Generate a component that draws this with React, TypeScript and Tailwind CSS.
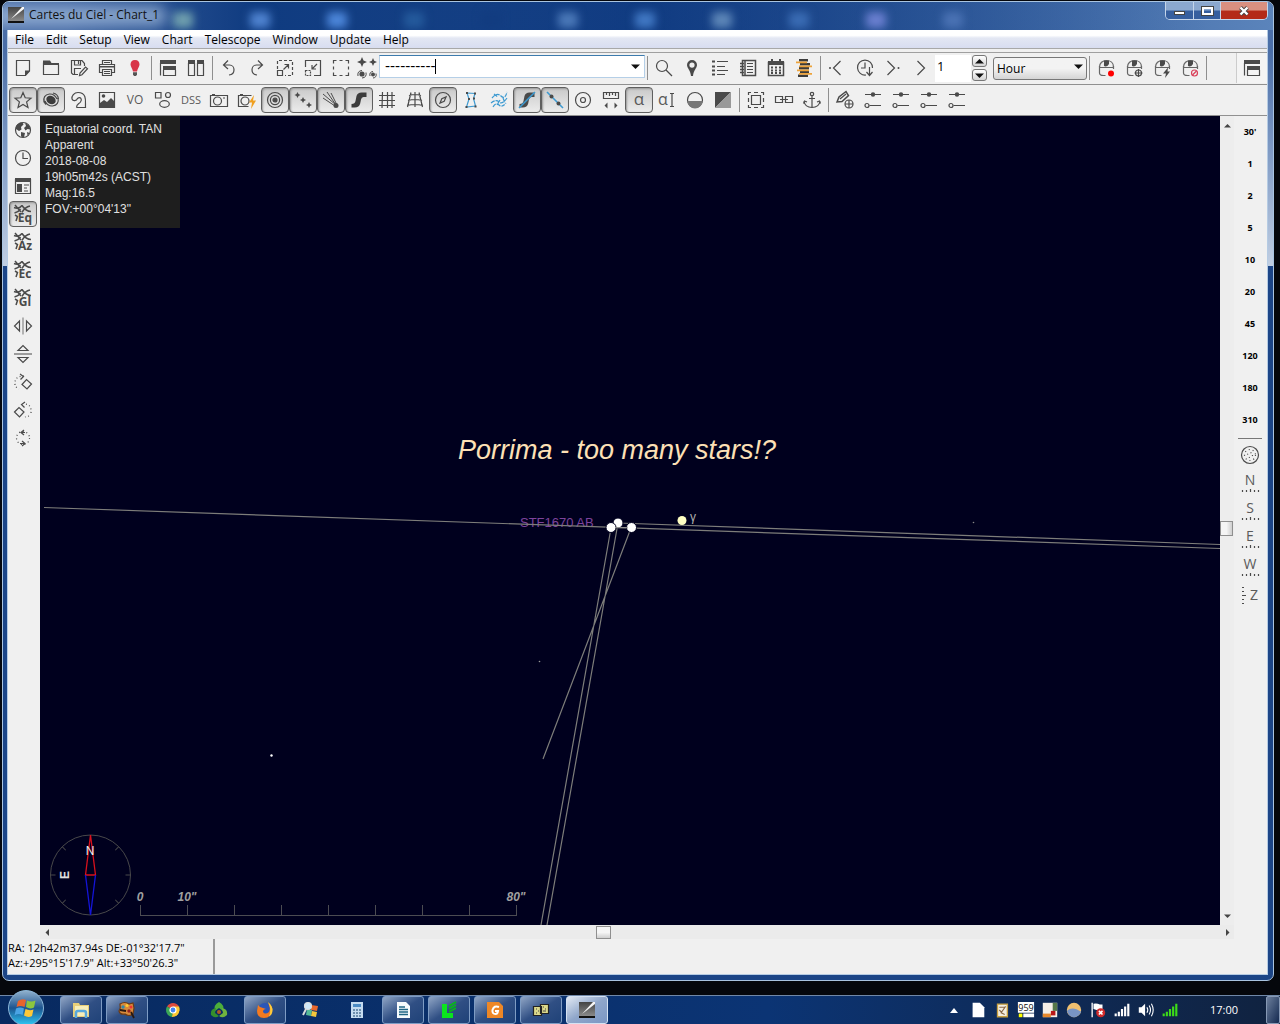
import { ReactNode } from 'react';

const INK = '#4a4a4a';
const BLUE = '#3d9ad1';

function Icon({ children, size = 20 }: { children: ReactNode; size?: number }) {
    return (
        <svg width={size} height={size} viewBox="0 0 20 20" fill="none" stroke={INK} strokeWidth="1.2" className="shrink-0 overflow-visible">
            {children}
        </svg>
    );
}

function Solid({ d, color = INK }: { d: string; color?: string }) {
    return <path d={d} fill={color} stroke="none" />;
}

function IconText({ children, x = 10, y = 14, size = 12 }: { children: ReactNode; x?: number; y?: number; size?: number }) {
    return (
        <text x={x} y={y} fontSize={size} textAnchor="middle" fill="#5a5a5a" stroke="none" fontFamily="'Open Sans', sans-serif">
            {children}
        </text>
    );
}

type Tool = { name: string; icon: ReactNode; pressed?: boolean };

function ToolButton({ name, icon, pressed }: Tool) {
    return (
        <button
            type="button"
            aria-label={name}
            aria-pressed={pressed}
            className={
                pressed
                    ? 'flex h-[26px] w-7 shrink-0 items-center justify-center rounded-[4px] border border-[#5f5f5f] bg-linear-to-b from-[#c9c9c9] to-[#ececec] shadow-[inset_1px_1px_2px_#999]'
                    : 'flex h-[26px] w-7 shrink-0 items-center justify-center'
            }
        >
            <Icon>{icon}</Icon>
        </button>
    );
}

function Sep() {
    return <div className="mx-[2px] h-6 w-px shrink-0 bg-[#8f8f8f]" />;
}

/* ---------- main toolbar ---------- */

const mouse = (
    <>
        <path d="M3.5 8v7q0 2.500 4 2.500h2M17.500 8v3M3.500 9.500h14" stroke="#666" />
        <path d="M3.500 9c0-4 3-6.500 7-6.500s7 2.500 7 6.500" stroke="#666" />
        <Solid d="M8 2.500h5v3.500q-1.500 2.500-3.500 2.500T8 6z" />
    </>
);

const fileTools: Tool[] = [
    { name: 'New chart', icon: <><path d="M3.500 2.500h13v10.500l-4 4.500h-9z" /><Solid d="M17 12.500h-5V18z" /></> },
    { name: 'Open', icon: <><path d="M2.500 4.500v12h15v-10" /><Solid d="M2 2.500h7l1.500 2.500H18v2H2z" /></> },
    {
        name: 'Save',
        icon: (
            <>
                <path d="M9 16.500H4l-1.500-1.500V2.500H13l2.500 3V8M5.500 2.500v4.500h6V2.500M9.500 3v3M5.500 16v-5.500H12" />
                <path d="m10.500 17.500.5-2.500 5.500-6 2 1.700-5.500 6z" />
            </>
        ),
    },
    {
        name: 'Print',
        icon: (
            <>
                <path d="M5.500 6.500v-4h9v4M5.500 14.500h-3v-8h15v8h-3" />
                <path d="M5.500 11.500h9v6h-9zM7 4.500h6M7 13.500h6M7 15.500h6" />
                <Solid d="M3 8h14v1.500H3z" />
            </>
        ),
    },
    { name: 'Night vision', icon: <><Solid d="M10 2c3 0 4.500 2 4.500 4.500 0 2-2 4-2.500 7H8c-.5-3-2.500-5-2.500-7C5.500 4 7 2 10 2z" color="#d83548" /><Solid d="M8 14.300h4v2.200l-1 1.500H9l-1-1.500z" color="#555" /></> },
];

const windowTools: Tool[] = [
    { name: 'Cascade', icon: <><Solid d="M2 2h16v4H2zM5 8h13v4H5z" /><path d="M2.500 5v12.500M5.500 12v5.500h12V12" strokeWidth="1.200" /></> },
    { name: 'Tile', icon: <><Solid d="M2 2h7v4H2zM11 2h7v4h-7z" /><path d="M2.500 5v12.500h6V5M11.500 5v12.500h6V5" strokeWidth="1.200" /></> },
];

const historyTools: Tool[] = [
    { name: 'Undo', icon: <path d="M9 2.500 4.500 7 9 11M5 7h5.500c3 0 4.500 2.500 4.500 4.700 0 3-2 5-5 5.300" /> },
    { name: 'Redo', icon: <path d="M11 2.500 15.500 7 11 11M15 7H9.500C6.500 7 5 9.500 5 11.700c0 3 2 5 5 5.300" /> },
    { name: 'Zoom in', icon: <><path d="M2.500 11V2.500h15v15H10" strokeDasharray="3 2" /><path d="M2.500 12.500h5v5h-5zM8.500 11.500 13 7M9.500 6.500h4v4" /></> },
    { name: 'Zoom out', icon: <><path d="M2.500 9V2.500h15v15H11" /><path d="M2.500 12.500h5v5h-5z" strokeDasharray="2 1" /><path d="m14 6-4.500 4.500M9 7v4h4" /></> },
    { name: 'Select area', icon: <path d="M2.500 5.500v-3h3M8.500 2.500h3M14.500 2.500h3v3M17.500 8.500v3M17.500 14.500v3h-3M11.500 17.500h-3M5.500 17.500h-3v-3M2.500 11.500v-3" /> },
];

const findTools: Tool[] = [
    { name: 'Search', icon: <><circle cx="8" cy="8" r="5.500" /><path d="m12 12 6 6" /></> },
    { name: 'Position', icon: <path fillRule="evenodd" fill={INK} stroke="none" d="M10 2a5 5 0 0 1 5 5c0 3-3.500 5-4 11H9C8.500 12 5 10 5 7a5 5 0 0 1 5-5zm0 2.500a2.600 2.600 0 1 0 0 5.200 2.600 2.600 0 0 0 0-5.200z" /> },
    { name: 'Object list', icon: <><path d="M7 3.500h11M7 8.500h8M7 12.500h11M7 16.500h8" /><path d="M2 3.500h3M2 8.500h3M2 12.500h3M2 16.500h3" strokeWidth="2" /></> },
    { name: 'Notebook', icon: <><path d="M4.500 2.500h13v15h-13z" strokeWidth="1.500" /><path d="M9 5.500h6M9 8.500h6M9 11.500h6M9 14.500h6" /><path d="M7 3v14M2 5.500h4M2 8.500h4M2 11.500h4M2 14.500h4" strokeWidth="1.500" /></> },
    { name: 'Calendar', icon: <><path d="M2.500 4.500h15v13h-15z" strokeWidth="1.500" /><Solid d="M2 3h16v4H2zM5 1h2v3H5zM13 1h2v3h-2z" /><path d="M5 9.500h10M5 12.500h10M5 15h10" strokeDasharray="2 2" strokeWidth="1.800" /></> },
    {
        name: 'Observing list',
        icon: (
            <>
                <Solid d="M5 1h9v2.500H5zM6 5h10v2.500H6zM5 9h10v2.500H5zM6 13h9v2.500H6zM4 16.500h10V19H4z" color="#3c3c3c" />
                <path d="M2 4.300h11M5 8.300h13M3 12.300h12M5 15.900h13" stroke="#eda33b" strokeWidth="1.700" />
            </>
        ),
    },
];

const timeTools: Tool[] = [
    { name: 'Step back', icon: <><path d="M13.500 3 6.500 10l7 7" /><circle cx="3" cy="10" r="1" fill={INK} stroke="none" /></> },
    { name: 'Now', icon: <><path d="M11 17a7.500 7.500 0 1 1 6.500-7" /><path d="M10 4.500V10H6M14.500 9v8M11.500 14l3 3.500 3-3.500" /></> },
    { name: 'Step forward', icon: <><path d="m4.500 3 7 7-7 7" /><circle cx="15.500" cy="10" r="1" fill={INK} stroke="none" /></> },
    { name: 'Animate', icon: <path d="m6.500 3 7 7-7 7" /> },
];

const scopeTools: Tool[] = [
    { name: 'Connect telescope', icon: <>{mouse}<circle cx="15" cy="15.500" r="3" fill="#f00" stroke="none" /></> },
    { name: 'Slew', icon: <>{mouse}<circle cx="14.500" cy="15" r="3" /><path d="M14.500 11v8M10.500 15h8" /></> },
    { name: 'Sync', icon: <>{mouse}<Solid d="m16 9.500-5 6h3L13 20l5-6.500h-2.500z" /></> },
    { name: 'Abort slew', icon: <>{mouse}<circle cx="14.500" cy="15" r="3" stroke="#d9415a" /><path d="m12.500 17 4-4" stroke="#d9415a" /></> },
];

/* ---------- object toolbar ---------- */

const sliders = (
    <>
        <path d="M2 4.500h16M6.500 15.500H18" />
        <circle cx="10" cy="4.500" r="2.200" fill={INK} stroke="none" />
        <circle cx="4" cy="15.500" r="2" />
    </>
);

const sBand = 'M2.500 17.500v-3.500q3.500 0 4-3l1-5q1-3.500 5-3.500h5v4.500h-3q-2 0-2.500 2.500l-.8 4q-1 4-5.500 4z';

const objectTools: Tool[] = [
    { name: 'Stars', pressed: true, icon: <path d="m10 2.500 2.200 5.300 5.800.4-4.400 3.700 1.400 5.600-5-3-5 3 1.400-5.600L2 8.200l5.800-.4z" /> },
    {
        name: 'Nebulae',
        pressed: true,
        icon: (
            <>
                <ellipse cx="10" cy="10" rx="5" ry="4" fill="#3c3c3c" stroke="none" transform="rotate(35 10 10)" />
                <path d="M3 12.500Q1.500 5 8.500 4q5-.3 7.500 5M5 14.500q-2.500-2.500-2-6M17 7.500q1.500 7.500-5.500 8.500-5 .3-7.500-5M12 3q5 1 5.500 6" />
            </>
        ),
    },
    { name: 'Nebula outlines', icon: <path d="M7.500 17.500h9C16 13 19 2.500 9 2.500 5 2.500 2.500 6 3 9c1 2.500 4.500 2 5.500-.5 3-2.500 5 1 3 3.500-1.500 2-4 2-4 5.500" /> },
    { name: 'Images', icon: <><path d="M2.500 2.500h15v15h-15z" /><circle cx="6.500" cy="6" r="1.800" fill={INK} stroke="none" /><Solid d="M3 13l4-3 3 2 4-4 4 4v5.500H3z" /></> },
    { name: 'Virtual observatory', icon: <IconText>VO</IconText> },
    { name: 'Asteroid shapes', icon: <><path d="M2.500 2.500h5.500v5.500H2.500z" /><circle cx="15" cy="5" r="2.500" /><ellipse cx="11.500" cy="14" rx="4.800" ry="3.300" /></> },
    { name: 'DSS images', icon: <IconText size={11}>DSS</IconText> },
    { name: 'Picture', icon: <><path d="M1.500 5.500h17v11h-17zM3 4.500h3" /><circle cx="8.500" cy="11" r="4" /><path d="M14 8h2" /></> },
    { name: 'Blink', icon: <><path d="M1.500 5.500h13M1.500 5v11.500h10M3 4.500h3" /><circle cx="8" cy="11" r="4" /><Solid d="m17 5-5 7.500h3L14 19l5-8.500h-3z" color="#f0a020" /></> },
    { name: 'Planets', pressed: true, icon: <><circle cx="10" cy="10" r="7.500" /><circle cx="10" cy="10" r="4.600" /><circle cx="10" cy="10" r="2" fill={INK} /></> },
    { name: 'Asteroids', pressed: true, icon: <Solid d="m4.500 2 1 2 2 1-2 1-1 2-1-2-2-1 2-1zM10 7l1 2 2 1-2 1-1 2-1-2-2-1 2-1zM16 12l1 2 2 1-2 1-1 2-1-2-2-1 2-1z" /> },
    { name: 'Comets', pressed: true, icon: <><path d="m2 4 13 11M6 2l9 13M2 8l12 8M10 3l6 12" strokeWidth="1" /><circle cx="15" cy="15.500" r="2.500" fill={INK} stroke="none" /></> },
    { name: 'Milky way', pressed: true, icon: <Solid d={sBand} color="#3c3c3c" /> },
    { name: 'Equatorial grid', icon: <path d="M5.500 2 5 18M10.500 2v16M15 2v16M2 5.500h16M2 10.500h16M2 15.500h16" /> },
    { name: 'Azimuthal grid', icon: <path d="M6 2.500 2.500 17M10 2v15M14 2.500 17.500 17M4 5.500q6-2 12 0M3 10.500q7-2 14 0M2 15.500q8-2 16 0" /> },
    { name: 'Compass', pressed: true, icon: <><circle cx="10" cy="10" r="7.500" /><path d="m13 7-1.800 4.200L7 13l1.800-4.200z" /></> },
    { name: 'Constellation figures', icon: <><path d="m6 3 8 .5-1.500 5 2 7.500L5.500 17 8 9z" stroke={BLUE} /><path d="M5 3h2M13 3.500h2M7 9h2M12 8.500h2M4.500 17h2M13.500 16.500h2" strokeWidth="2" /></> },
    { name: 'Constellation art', icon: <path d="M3 8q5-6 9-2t6-4M2 13q5-4 8-1t8-4M4 17q3-5 6-2t7-2M5 4l4 3M11 10l-3 5M14 8l2 5" stroke={BLUE} strokeDasharray="4 1" /> },
    { name: 'Galactic equator', pressed: true, icon: <><Solid d={sBand} /><path d="M2 18 18 2" stroke={BLUE} strokeWidth="1.600" /></> },
    { name: 'Ecliptic', pressed: true, icon: <><path d="m2 2 16 16" stroke={BLUE} strokeWidth="1.600" /><circle cx="6.500" cy="6.500" r="2" fill={INK} stroke="none" /><circle cx="13.500" cy="13.500" r="2" fill={INK} stroke="none" /></> },
    { name: 'Mark center', icon: <><circle cx="10" cy="10" r="7.500" /><circle cx="10" cy="10" r="2.500" /></> },
    { name: 'Measure', icon: <><path d="M2.500 2.500h15v6h-15zM5.500 3v2M8.500 3v3M11.500 3v2M14.500 3v3" /><Solid d="m6.500 12.500-3 3 3 3zM13.500 12.500l3 3-3 3z" /></> },
    { name: 'Labels', pressed: true, icon: <IconText size={17} y={15}>α</IconText> },
    { name: 'Edit labels', icon: <><IconText size={16} x={6} y={15}>α</IconText><path d="M13 3.500h4M13 16.500h4M15 3.500v13" /></> },
    { name: 'Horizon', icon: <><circle cx="10" cy="10" r="7.500" /><Solid d="M2.500 11h15a7.500 7.500 0 0 1-15 0z" color="#777" /></> },
    { name: 'Night colors', icon: <><Solid d="M2 2h16L2 18z" /><Solid d="M18 2v16H2z" color="#999" /></> },
];

const frameTools: Tool[] = [
    { name: 'CCD frame', icon: <><path d="M5.500 5.500h9v9h-9z" /><path d="M2.500 5V2.500H5M15 2.500h2.500V5M17.500 15v2.500H15M5 17.500H2.500V15M8 2.500h4M8 17.500h4M2.500 8v4M17.500 8v4" /></> },
    { name: 'Link charts', icon: <path d="M1.500 6.500h7v6h-7zM11.500 6.500h7v6h-7zM6 9.500h8" /> },
    { name: 'Lock on object', icon: <><circle cx="10" cy="4" r="1.700" /><path d="M10 6v12M7 8.500h6M2 11q1 6.500 8 6.500t8-6.500M1.500 13.500 2.500 11l2.500 1M18.500 13.500 17.500 11l-2.500 1" /></> },
];

const setupTools: Tool[] = [
    { name: 'Telescope frame', icon: <><path d="m2 12 2-5 7-5.500 2.500 4-6.500 6z" strokeWidth="1.500" /><path d="m5 9 6-5" /><circle cx="14" cy="14" r="4" /><path d="M14 10v8M10 14h8" /></> },
    { name: 'Star settings', icon: sliders },
    { name: 'Nebula settings', icon: sliders },
    { name: 'Line settings', icon: sliders },
    { name: 'Label settings', icon: sliders },
];

/* ---------- side bars ---------- */

function gridLabel(label: string) {
    return (
        <>
            <path d="M1 3.500q5 2 8-2M9 1.500q4 6 9 6M17 2q-5 1-8 6.500M2 1l6 7M1.500 9q4-1 6-4M2 11l2.500 1.500L3 17" strokeWidth="1.500" />
            <text x="12" y="18" fontSize="12" fontWeight="700" textAnchor="middle" fill={INK} stroke="none" fontFamily="'Open Sans', sans-serif">
                {label}
            </text>
        </>
    );
}

const leftTools: Tool[] = [
    { name: 'Observatory', icon: <><circle cx="10" cy="10" r="7.500" /><Solid d="M3 6q3-4 6.500-3.500l1 2L8 7l.5 2.500L6 11l-3-2zM12 3l4 2.500 1.500 4-3-.5-2 1.500L11 8l2-2zM8 12l4 1-1 4.500-3-1zM14 12l2.500 1-2 2.500z" /></> },
    { name: 'Date and time', icon: <><circle cx="10" cy="10" r="7.500" /><path d="M10 4.500V10.500h5" /></> },
    { name: 'Chart information', icon: <><path d="M2.500 3.500h15v14h-15z" /><Solid d="M2 2h16v4H2zM4 8h5v8H4z" /><path d="M11 9h5M11 12h3M11 15h4" /></> },
    { name: 'Equatorial coordinates', pressed: true, icon: gridLabel('Eq') },
    { name: 'Azimuth coordinates', icon: gridLabel('Az') },
    { name: 'Ecliptic coordinates', icon: gridLabel('Ec') },
    { name: 'Galactic coordinates', icon: gridLabel('Gl') },
    { name: 'Flip horizontally', icon: <><path d="M10 1.500v17" stroke="#888" /><path d="M6.500 5v10l-5-5zM13.500 5v10l5-5z" /></> },
    { name: 'Flip vertically', icon: <><path d="M1 10h18" stroke="#888" strokeWidth="1.600" /><path d="M5 6.500h10l-5-5zM5 13.500h10l-5 5z" /></> },
    { name: 'Rotate right', icon: <><path d="M2 13q-1-9 9-9M3 15l3 2" strokeDasharray="1 2.500" /><path d="m7 2 3.500 2.500L7.500 7.500M9 12.500l4.500-5 5 4.500-4.500 5z" /></> },
    { name: 'Rotate left', icon: <><path d="M18 13q1-9-7-9M16 16l-4 1" strokeDasharray="1 2.500" /><path d="M12 2 8.500 4.500l3 3M1.500 12 6 7.500l5 4.500-4.500 5z" /></> },
    { name: 'Reset rotation', icon: <><circle cx="10" cy="10" r="6.500" strokeDasharray="1 2.700" /><path d="M11 2 8 4.500 11 7M8 4.500h4M9 13l3 2.500L9 18M7 15.500h5" /></> },
];

const fovSteps = ["30'", '1', '2', '5', '10', '20', '45', '120', '180', '310'];

function horizonIcon(letter: string) {
    return (
        <>
            <IconText size={14} y={12}>{letter}</IconText>
            <path d="M2.500 17v2M6.500 17v2M10.500 16v3M14.500 17v2M18.500 17v2" />
        </>
    );
}

const viewTools: Tool[] = [
    { name: 'All sky', icon: <><circle cx="10" cy="10" r="8.500" /><circle cx="10" cy="10" r="5.500" strokeDasharray="1 3" /><circle cx="10" cy="10" r="2.500" strokeDasharray="1 3" /></> },
    { name: 'North', icon: horizonIcon('N') },
    { name: 'South', icon: horizonIcon('S') },
    { name: 'East', icon: horizonIcon('E') },
    { name: 'West', icon: horizonIcon('W') },
    { name: 'Zenith', icon: <><IconText size={14} x={14} y={15}>Z</IconText><path d="M2 2.500h2M2 6.500h2M2 10.500h4M2 14.500h2M2 18.500h2" /></> },
];

function Tools({ items }: { items: Tool[] }) {
    return (
        <>
            {items.map((t) => (
                <ToolButton key={t.name} {...t} />
            ))}
        </>
    );
}

/* ---------- window parts ---------- */

function AppLogo() {
    return (
        <svg width="16" height="16" viewBox="0 0 16 16" className="shrink-0">
            <defs>
                <linearGradient id="sky" x1="0" y1="0" x2="0" y2="1">
                    <stop offset="0" stopColor="#444" />
                    <stop offset="0.85" stopColor="#888" />
                    <stop offset="0.86" stopColor="#111" />
                </linearGradient>
            </defs>
            <path d="M0 0h16v16H0z" fill="url(#sky)" />
            <path d="M14 0h2v2L7 9 3 12z" fill="#f5f5f5" />
        </svg>
    );
}

const blobs = [
    'bg-[#6f9fae]', 'bg-[#4f83d0]', 'bg-[#4c86da]', 'bg-[#245a9c]', 'bg-[#123c80]', 'bg-[#4a78b8]',
    'bg-[#4178c4]', 'bg-[#5d86b8]', 'bg-[#3a6cb4]', 'bg-[#6a7fd0]', 'bg-[#4a72b4]',
];

function TitleBar() {
    return (
        <header className="relative flex h-7 shrink-0 items-start overflow-hidden rounded-t-[7px] bg-linear-to-r from-[#4a6ea8] via-[#123c84] to-[#5b84bb]">
            <div className="absolute inset-x-0 top-0 h-full bg-linear-to-r from-transparent from-5% via-[#0f3b80] via-20% to-transparent to-95%" />
            <div className="absolute inset-y-0 left-[170px] flex w-[790px] items-center justify-between blur-[4px]">
                {blobs.map((b, i) => (
                    <span key={i} className={`mt-2 h-4 w-5 rounded-sm ${b}`} />
                ))}
            </div>
            <div className="absolute top-1 -left-4 h-5 w-[180px] rounded-full bg-[#9db7d8] opacity-80 blur-[7px]" />
            <div className="relative flex items-center gap-[5px] pt-[5px] pl-[5px]">
                <AppLogo />
                <h1 className="text-[12px] leading-4 text-[#111]">Cartes du Ciel - Chart_1</h1>
            </div>
            <div className="relative mr-[5px] ml-auto flex h-[18px] overflow-hidden rounded-b-[5px] border border-t-0 border-[#c5d5ea]">
                <button type="button" aria-label="Minimize" className="flex w-7 items-end justify-center border-r border-[#c5d5ea] bg-linear-to-b from-[#8ba8cf] from-45% to-[#365f9f] to-55% pb-1">
                    <span className="h-1 w-[11px] border border-[#444] bg-white" />
                </button>
                <button type="button" aria-label="Maximize" className="flex w-[27px] items-center justify-center border-r border-[#c5d5ea] bg-linear-to-b from-[#8ba8cf] from-45% to-[#365f9f] to-55%">
                    <span className="h-2 w-[11px] border-2 border-white outline outline-[#444]" />
                </button>
                <button type="button" aria-label="Close" className="flex w-[46px] items-center justify-center bg-linear-to-b from-[#d99080] from-45% to-[#b42a18] to-55%">
                    <svg width="12" height="10" viewBox="0 0 12 10">
                        <path d="m2.500 1.500 7 7m0-7-7 7" stroke="#444" strokeWidth="4" />
                        <path d="m2.500 1.500 7 7m0-7-7 7" stroke="#fff" strokeWidth="2.400" />
                    </svg>
                </button>
            </div>
        </header>
    );
}

const menus = ['File', 'Edit', 'Setup', 'View', 'Chart', 'Telescope', 'Window', 'Update', 'Help'];

function MenuBar() {
    return (
        <nav className="flex h-[19px] shrink-0 items-center border-b border-[#a8a8a8] bg-linear-to-b from-white from-30% via-[#e3e7f3] via-45% to-[#d8ddf0] pt-px pl-px">
            {menus.map((m) => (
                <button key={m} type="button" className="px-[6px] text-[12px] leading-4 text-black">{m}</button>
            ))}
        </nav>
    );
}

function Triangle({ d }: { d: string }) {
    return (
        <svg width="9" height="9" viewBox="0 0 9 9" className="shrink-0">
            <path d={d} fill="#111" />
        </svg>
    );
}

const UP = 'M0 6.500h9L4.500 2z';
const DOWN = 'M0 2.500h9L4.500 7z';

function MainToolbar() {
    return (
        <div className="flex h-8 shrink-0 items-center border-t border-[#a0a0a0] pb-px pl-px">
            <Tools items={fileTools} />
            <Sep />
            <Tools items={windowTools} />
            <Sep />
            <Tools items={historyTools} />
            <button type="button" aria-label="Show more or fewer objects" className="flex w-6 justify-center">
                <svg width="22" height="24" viewBox="0 0 22 24" fill={INK}>
                    <path d="m6 1 1.500 3.500L11 6 7.500 7.500 6 11 4.500 7.500 1 6l3.500-1.500zM17 2l1.200 2.800L21 6l-2.800 1.200L17 10l-1.200-2.800L13 6l2.800-1.200z" />
                    <circle cx="6" cy="18" r="2.600" />
                    <circle cx="17" cy="18.500" r="2" />
                    <path d="M2 20q-1-5 4-5.500M10 16.500q1 5-4 5.500M14 20q-1-4 3-4.500M20 17.500q1 4-3 4.500" fill="none" stroke={INK} />
                </svg>
            </button>
            <div className="relative mb-1 flex h-[23px] w-[266px] shrink-0 items-center border border-[#b5cfe7] border-t-[#3d7bad] bg-white">
                <input
                    type="text"
                    aria-label="Object name"
                    defaultValue="----------"
                    className="h-full min-w-0 flex-1 bg-transparent pl-[5px] font-['DejaVu_Sans',sans-serif] text-[14px] text-black outline-none"
                />
                <span className="absolute top-[3px] left-[55px] h-[15px] w-px bg-black" />
                <button type="button" aria-label="Search history" className="px-1"><Triangle d={DOWN} /></button>
            </div>
            <Sep />
            <Tools items={findTools} />
            <Sep />
            <Tools items={timeTools} />
            <input type="text" aria-label="Time step" defaultValue="1" className="h-[27px] w-9 shrink-0 bg-white px-[2px] pb-1 text-[13px] text-black outline-none" />
            <div className="ml-px flex flex-col gap-[2px]">
                <button type="button" aria-label="Increase" className="flex h-3 w-[15px] items-center justify-center rounded-[3px] border border-[#777] bg-linear-to-b from-white to-[#d5d5d5]"><Triangle d={UP} /></button>
                <button type="button" aria-label="Decrease" className="flex h-3 w-[15px] items-center justify-center rounded-[3px] border border-[#777] bg-linear-to-b from-white to-[#d5d5d5]"><Triangle d={DOWN} /></button>
            </div>
            <div className="relative mb-1 ml-[6px] h-[23px] w-[94px] shrink-0">
                <select aria-label="Time unit" className="h-full w-full appearance-none rounded-[3px] border border-[#777] bg-linear-to-b from-[#f3f3f3] from-50% to-[#d4d4d4] px-[3px] text-[12px] leading-4 text-black">
                    <option>Hour</option>
                </select>
                <span className="pointer-events-none absolute top-[7px] right-1"><Triangle d={DOWN} /></span>
            </div>
            <Sep />
            <Tools items={scopeTools} />
            <Sep />
            <div className="ml-auto flex h-full items-center border-l border-[#ccc] bg-[#f4f4f4] px-px">
                <ToolButton name="Window mode" icon={windowTools[0].icon} />
            </div>
        </div>
    );
}

function ObjectToolbar() {
    return (
        <div className="flex h-8 shrink-0 items-center border-t border-b border-[#909090] pl-px">
            <Tools items={objectTools} />
            <Sep />
            <Tools items={frameTools} />
            <Sep />
            <Tools items={setupTools} />
        </div>
    );
}

const compassTicks = [45, 90, 135, 225, 270, 315];
const scaleTicks = [0, 47, 94, 141, 188, 235, 282, 329, 376];

function SkyChart() {
    return (
        <main className="relative flex-1 overflow-hidden bg-[#00001e] font-['Liberation_Sans',sans-serif]">
            <svg className="absolute inset-0 h-full w-full" fill="none">
                <text x="480" y="411" fontSize="13" fill="#7d439c">STF1670 AB</text>
                <g stroke="#7d7d7a" strokeWidth="1.200">
                    <path d="M4 391.500 1180 432.500M578 407l602 21.500" />
                    <path d="M571 412 501 809M578 407 507 809M591 412 503 643" />
                </g>
                <g fill="#fff" stroke="#00001e">
                    <circle cx="578" cy="407" r="5" />
                    <circle cx="571" cy="411.500" r="5" />
                    <circle cx="591.500" cy="411.500" r="5" />
                </g>
                <path d="M575 411.700h13" stroke="#9a9a98" />
                <circle cx="642" cy="404.500" r="4.500" fill="#ffffc4" />
                <text x="650" y="405" fontSize="12" fill="#b0b0b0">γ</text>
                <circle cx="231.500" cy="639.500" r="1.200" fill="#fff" />
                <circle cx="499.500" cy="545.500" r=".8" fill="#999" />
                <circle cx="933.500" cy="406.500" r=".8" fill="#888" />
                <text x="418" y="343" fontSize="27" fontStyle="italic" fill="#fde0b6">Porrima - too many stars!?</text>
            </svg>

            <div className="relative h-28 w-[140px] bg-[#1e1e1e] px-[5px] pt-[5px] text-[12px] leading-4 whitespace-nowrap text-[#e0e0e0]">
                <p>Equatorial coord. TAN</p>
                <p>Apparent</p>
                <p>2018-08-08</p>
                <p>19h05m42s (ACST)</p>
                <p>Mag:16.5</p>
                <p>FOV:+00°04'13"</p>
            </div>

            <svg width="500" height="100" viewBox="0 0 500 100" fill="none" className="absolute bottom-0 left-0">
                <circle cx="50.500" cy="50" r="40" stroke="#48484a" />
                {compassTicks.map((a) => (
                    <path key={a} d="M50.500 10v5" stroke="#48484a" transform={`rotate(${a} 50.500 50)`} />
                ))}
                <path d="M50.500 10 55.500 50h-10z" stroke="#d8101c" strokeWidth="1.300" />
                <path d="M45.500 50 50.500 90l5-40" stroke="#1414d8" strokeWidth="1.300" />
                <text x="50" y="30" fontSize="12" textAnchor="middle" fill="#f0f0f0">N</text>
                <text x="25" y="54" fontSize="12" fontWeight="700" textAnchor="middle" fill="#e0e0e0" transform="rotate(-90 25 50)">E</text>
                <path d="M100 90.500h377" stroke="#4c4c52" />
                {scaleTicks.map((x) => (
                    <path key={x} d={`M${x + 100.5} 80v10`} stroke="#4c4c52" />
                ))}
                <g fontSize="12" fontStyle="italic" fontWeight="700" textAnchor="middle" fill="#a0a0a0">
                    <text x="100" y="76">0</text>
                    <text x="147" y="76">10"</text>
                    <text x="476" y="76">80"</text>
                </g>
            </svg>
        </main>
    );
}

function ScrollArrow({ name, d }: { name: string; d: string }) {
    return (
        <button type="button" aria-label={name} className="flex h-[14px] w-[14px] items-center justify-center">
            <svg width="7" height="7" viewBox="0 0 7 7"><path d={d} fill="#444" /></svg>
        </button>
    );
}

function Body() {
    return (
        <div className="flex min-h-[560px] flex-1">
            <aside className="flex w-8 shrink-0 flex-col items-center gap-[2px] pt-px pr-[2px]">
                <Tools items={leftTools} />
            </aside>
            <div className="flex min-w-0 flex-1 flex-col">
                <div className="flex flex-1">
                    <SkyChart />
                    <div className="relative flex w-[14px] flex-col justify-between bg-[#ededed] py-[2px]">
                        <ScrollArrow name="Scroll up" d="M0 5.500h7L3.500 2z" />
                        <div className="absolute top-1/2 h-[15px] w-[13px] border border-[#8f8f8f] bg-linear-to-r from-[#f5f5f5] from-50% to-[#cfcfcf]" />
                        <ScrollArrow name="Scroll down" d="M0 1.500h7L3.500 5z" />
                    </div>
                </div>
                <div className="relative flex h-[14px] items-center justify-between bg-[#ebebeb]">
                    <ScrollArrow name="Scroll left" d="M5 0v7L1.500 3.500z" />
                    <div className="absolute left-[46.600%] h-[13px] w-[15px] border border-[#8f8f8f] bg-linear-to-b from-[#f5f5f5] from-50% to-[#cfcfcf]" />
                    <ScrollArrow name="Scroll right" d="M2 0v7l3.500-3.500z" />
                </div>
            </div>
            <aside className="flex w-[33px] shrink-0 flex-col items-center pr-px">
                {fovSteps.map((f) => (
                    <button key={f} type="button" className="h-8 w-7 text-[9px] leading-4 font-bold text-black">{f}</button>
                ))}
                <div className="my-[2px] h-px w-6 shrink-0 bg-[#777]" />
                <div className="flex flex-col gap-[2px] pt-px">
                    <Tools items={viewTools} />
                </div>
            </aside>
        </div>
    );
}

function StatusBar() {
    return (
        <footer className="flex h-[35px] shrink-0 text-[11px] leading-[15px] text-black">
            <div className="w-[207px] border-r-2 border-[#9a9a9a] pt-px whitespace-nowrap">
                <p>RA: 12h42m37.94s DE:-01°32'17.7"</p>
                <p>Az:+295°15'17.9" Alt:+33°50'26.3"</p>
            </div>
        </footer>
    );
}

/* ---------- taskbar ---------- */

type TaskApp = { name: string; icon: ReactNode; open?: boolean };

const apps: TaskApp[] = [
    { name: 'Explorer', open: true, icon: <><Solid d="M2 3h6l1 2h9v12H2z" color="#e9cf78" /><Solid d="M4 6h13v10H4z" color="#f8eeb8" /><path d="M5 18v-5q0-2 2-2h6q2 0 2 2v5" stroke="#58a8dc" strokeWidth="2.500" /></> },
    { name: 'Paint', open: true, icon: <><path d="M3 4q5-3 9 0l4-1 1 5-1 6q-4 3-8 0-5 1-6-3 2-3 1-7z" fill="#d88a3c" stroke="#6b3a14" /><circle cx="6" cy="7" r="1.700" fill="#38a" stroke="none" /><circle cx="10" cy="5.500" r="1.500" fill="#fc3" stroke="none" /><circle cx="14" cy="7" r="1.500" fill="#e33" stroke="none" /><circle cx="12" cy="11" r="1.700" fill="#922" stroke="none" /><path d="m3 10 6 1M14 12l3 6" stroke="#2a1810" strokeWidth="1.800" /></> },
    { name: 'Chrome', icon: <><Solid d="M10 10 4 6.500a7 7 0 0 1 12 0z" color="#dd4b3e" /><Solid d="M10 10 4 6.500A7 7 0 0 0 9 17z" color="#3aa757" /><Solid d="M10 10h6.300a7 7 0 0 1-7.300 7z" color="#fcc934" /><Solid d="M10 6.500h6.100q2 5-3 9.500z" color="#fcc934" /><circle cx="10" cy="10" r="3" fill="#4285f4" stroke="#fff" /></> },
    { name: 'Updater', icon: <><Solid d="M10 2q6 3 4 9l-4-3-4 3Q4 5 10 2z" color="#4cae3a" /><Solid d="M2 15q-1-6 5-7l-1 5 4 3q-4 3-8-1z" color="#358f2c" /><Solid d="M18 15q1-6-5-7l1 5-4 3q4 3 8-1z" color="#6fb43e" /><circle cx="10" cy="12" r="2" fill="#b05a20" stroke="none" /></> },
    { name: 'Firefox', open: true, icon: <><circle cx="10" cy="10" r="7" fill="#2b56b8" stroke="none" /><Solid d="M3 5q2 3 5 3l3 1q-3 0-3 3 2 3 6 0 2-4-1-9 5 3 4 8-1 7-8 7T2 11z" color="#f47a20" /><Solid d="M13 2q5 4 4.500 9-.5 4-3.500 5.500 3-7-1-14.500z" color="#ffcb3a" /></> },
    { name: 'Windows search', icon: <><Solid d="m6 9 5 1-1 6-5-1z" color="#5b9" /><Solid d="m10 5 7 1-1 5-6-1z" color="#e8672c" /><Solid d="m11 11 5 1-1 5-5-1z" color="#f5c83c" /><circle cx="7" cy="6" r="3.500" fill="#cfe8f7" stroke="#ddd" /><path d="m5 9-3 6" stroke="#ddd" strokeWidth="2" /></> },
    { name: 'Calculator', icon: <><Solid d="M4 2h12v16H4z" color="#c5dcf0" /><Solid d="M6 4h8v3H6z" color="#4d8cc4" /><path d="M6 10h8M6 13h8M6 16h8" stroke="#6d8fae" strokeWidth="2" strokeDasharray="2 1" /></> },
    { name: 'Writer', open: true, icon: <><Solid d="M4 2h9l4 4v12H4z" color="#f6fafc" /><path d="M6 7h6M6 9.500h9M6 12h9M6 14.500h9" stroke="#1f6584" strokeWidth="1.500" /></> },
    { name: 'Terminal', open: true, icon: <><Solid d="M3 4h5v9h6v5H3z" color="#0be51e" /><path d="m10 6 7-4M10 9l7-4M10 12l7-4" stroke="#08b818" strokeWidth="2" /></> },
    { name: 'Foxit', open: true, icon: <><Solid d="M2 2h12l4 4v12H2z" color="#ee8726" /><path d="M14 7q-5-2-6.500 3-.5 4 3 4 2 0 2.500-3h-3" stroke="#fff" strokeWidth="2" /></> },
    { name: 'Dominoes', open: true, icon: <><path d="M2.500 6.500h8v9h-8zM9.500 4.500h8v9h-8z" fill="#dcd98a" stroke="#222" /><path d="M5 9h1M7 11h1M5 13h1M12 7h1M14 9h1M12 11h3" stroke="#444" /></> },
];

const taskBase = 'flex h-full w-[42px] items-center justify-center rounded-[3px]';

function bars(color: string) {
    return <path d="M3 14v3M6.500 12v5M10 9v8M13.500 6v11M17 3v14" stroke={color} strokeWidth="2.400" />;
}

const tray: TaskApp[] = [
    { name: 'Document', icon: <Solid d="M4 2h8l5 5v11H4z" color="#fff" /> },
    { name: 'Clipboard', icon: <><path d="M5 3.500h11v14H5z" fill="#f4efe0" stroke="#c8a040" strokeWidth="1.500" /><path d="M7 7h6M7 10l3 3M14 6l-5 7 4 2" stroke="#864" /></> },
    { name: 'Counter', icon: <><Solid d="M1 1h18v12H1zM7 14h12v4H7z" color="#fff" /><Solid d="M2 14h4v4H2z" color="#ff0" /><text x="10" y="11" fontSize="10" textAnchor="middle" fill="#111" stroke="none">959</text></> },
    { name: 'Monitor', icon: <><Solid d="M2 2h16v16H2z" color="#f5efe8" /><Solid d="M13 2h5v9h-5z" color="#56784a" /><Solid d="M2 14h9v4H2z" color="#e7882c" /><Solid d="M11 11h5v5h-5z" color="#b81818" /></> },
    { name: 'Weather', icon: <><circle cx="10" cy="10" r="8" fill="#f0c070" stroke="none" /><Solid d="M2 11q6-6 16 1-3 6-8 6t-8-7z" color="#7894c4" /></> },
    { name: 'Action center', icon: <><path d="M3.500 2v16" stroke="#fff" strokeWidth="1.500" /><Solid d="M5 3q4-1 7 1h3v6q-5 1-10-1z" color="#fff" /><circle cx="13" cy="13" r="5" fill="#d22b2b" stroke="none" /><path d="m11 11 4 4m0-4-4 4" stroke="#fff" strokeWidth="1.800" /></> },
    { name: 'Network', icon: bars('#fff') },
    { name: 'Volume', icon: <><Solid d="M2 7h3l4-4v14l-4-4H2z" color="#fff" /><path d="M11 7q2 3 0 6M13.500 5q3 5 0 10M16 3q4 7 0 14" stroke="#fff" /></> },
    { name: 'Signal', icon: bars('#3ddc18') },
];

function TaskBar() {
    return (
        <div className="relative flex h-[29px] shrink-0 border-t border-[#7088a8] bg-linear-to-r from-[#082a60] via-[#0b3474] via-60% to-[#10223f]">
            <button type="button" aria-label="Start" className="absolute -top-[6px] left-2 h-9 w-9 rounded-full border border-[#8cb8da] bg-linear-to-b from-[#8fb0cc] via-[#1c5590] to-[#2ec8f4]">
                <svg width="34" height="34" viewBox="0 0 34 34">
                    <path d="M9 10q4-3 8-1l-1.500 7q-4-2-8 0z" fill="#e8642c" />
                    <path d="M18 9.500q4 2 8.500 0L25 16.500q-4 2-8-.5z" fill="#8cc63e" />
                    <path d="M7 17.500q4-2 8 0L13.500 24q-4-2-8 .5z" fill="#4aa4e4" />
                    <path d="M16.500 18q4 2 8 .5L23 25q-4 2-8-.5z" fill="#fcc838" />
                </svg>
            </button>
            <div className="flex gap-1 pl-[60px]">
                {apps.map((a) => (
                    <button
                        key={a.name}
                        type="button"
                        aria-label={a.name}
                        className={`${taskBase} ${a.open ? 'border border-[#7e9cc4] bg-linear-to-br from-[#90a5c4] via-[#304f84] to-[#1f4278]' : ''}`}
                    >
                        <Icon>{a.icon}</Icon>
                    </button>
                ))}
                <button type="button" aria-label="Cartes du Ciel" className={`${taskBase} border border-[#d5e2f2] bg-linear-to-br from-[#e2e9f2] via-[#8fa6ca] to-[#7b97c4]`}>
                    <AppLogo />
                </button>
            </div>
            <div className="ml-auto flex items-center">
                <button type="button" aria-label="Show hidden icons" className="flex w-6 justify-center">
                    <svg width="8" height="5" viewBox="0 0 8 5"><path d="M0 5h8L4 0z" fill="#fff" /></svg>
                </button>
                {tray.map((t) => (
                    <button key={t.name} type="button" aria-label={t.name} className="flex w-6 justify-center">
                        <Icon size={18}>{t.icon}</Icon>
                    </button>
                ))}
                <time className="w-[84px] text-center text-[11px] leading-4 text-white">17:00</time>
                <button type="button" aria-label="Show desktop" className="h-full w-[14px] rounded-[2px] border border-[#8698b4] bg-linear-to-br from-[#6d7f9c] to-[#152a50]" />
            </div>
        </div>
    );
}

export default function App() {
    return (
        <div className="flex min-h-screen flex-col bg-[#05070c] font-['Open_Sans',sans-serif]">
            <div className="mt-px mr-[6px] mb-[14px] ml-[2px] flex flex-1 flex-col rounded-[7px] border border-[#a9c4e0] bg-linear-to-b from-[#4a6ea8] from-5% via-[#c0cee2] via-27% to-[#1c4587] to-27%">
                <TitleBar />
                <div className="mr-[5px] mb-[5px] ml-1 flex flex-1 flex-col border border-t-0 border-[#b5cbe3] bg-[#f0f0f0]">
                    <MenuBar />
                    <div className="h-[3px] shrink-0" />
                    <MainToolbar />
                    <ObjectToolbar />
                    <Body />
                    <StatusBar />
                </div>
            </div>
            <TaskBar />
        </div>
    );
}
